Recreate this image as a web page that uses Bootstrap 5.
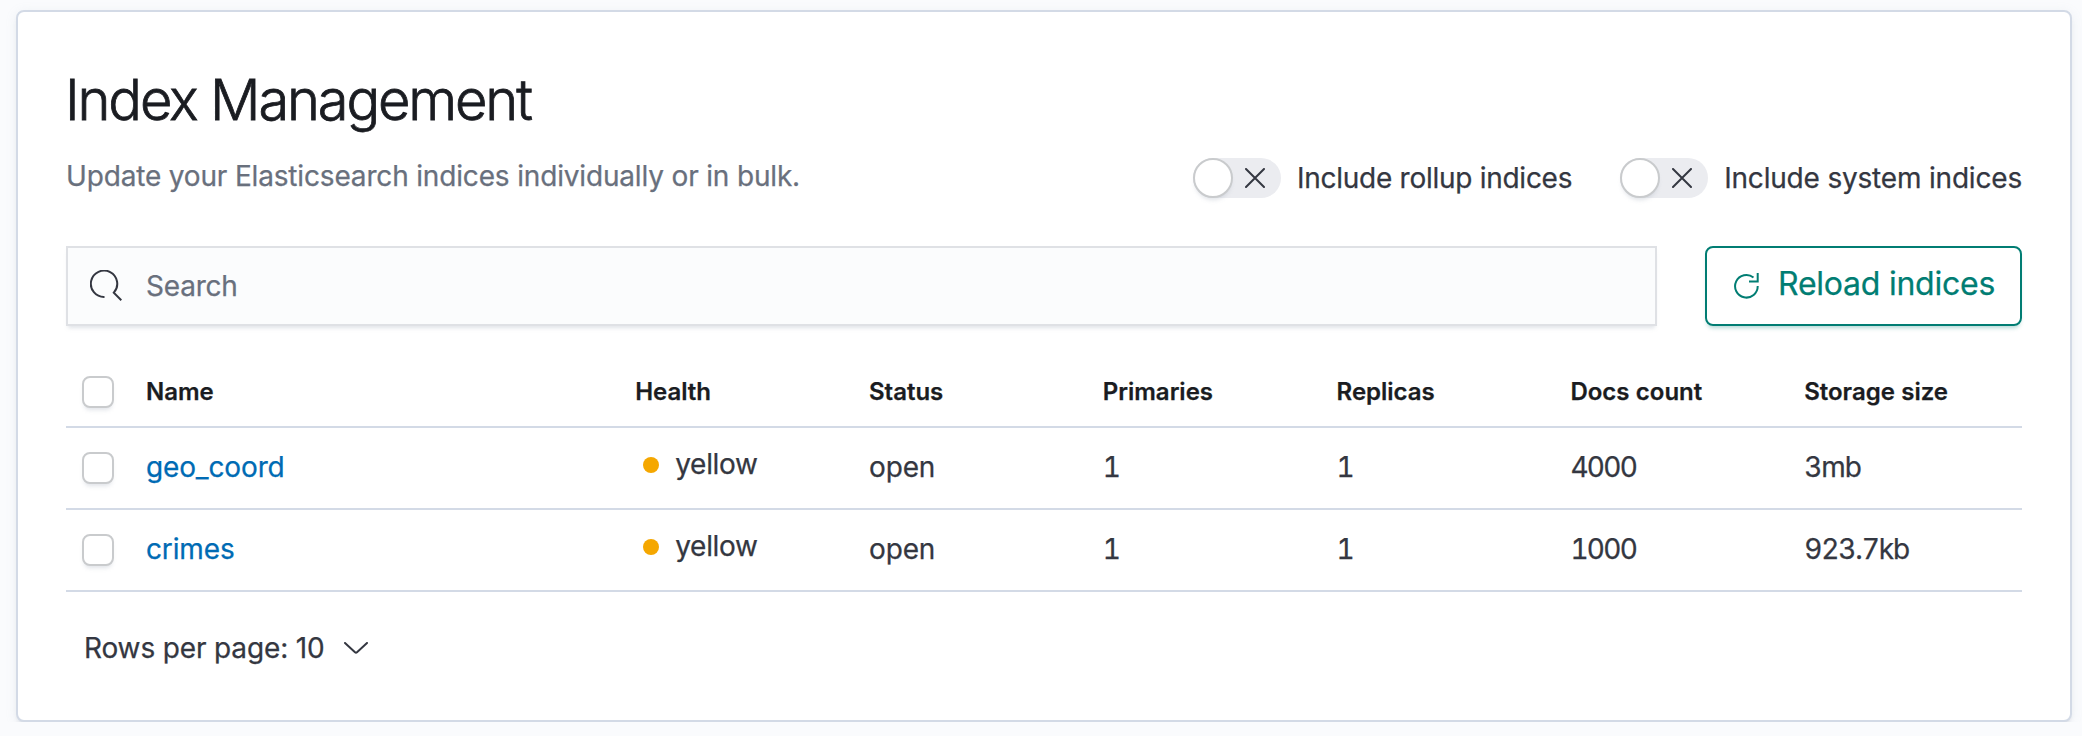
<!DOCTYPE html>
<html lang="en">
<head>
<meta charset="utf-8">
<meta name="viewport" content="width=device-width, initial-scale=1">
<title>Index Management</title>
<link href="https://cdn.jsdelivr.net/npm/bootstrap@5.3.0/dist/css/bootstrap.min.css" rel="stylesheet">
<style>
body{font-family:Inter,"Liberation Sans",sans-serif;font-size:28px;line-height:42px;letter-spacing:-.14px;color:#343741;background:#fafbfd;overflow:hidden;-webkit-text-stroke:.25px currentColor}
.panel{margin:10px 10px 0 16px;height:712px;padding:48px;border:2px solid #d3dae6;border-radius:8px;box-shadow:0 4px 4px -2px rgba(152,162,179,.3),0 2px 12px rgba(152,162,179,.12)}
.page-title{font-size:56px;line-height:80px;font-weight:300;letter-spacing:-2.15px;color:#1a1c21;margin-left:-1px;-webkit-text-stroke:.8px currentColor}
.subdued{color:#69707d;letter-spacing:-.165px}
.toolbar-top{margin-top:15px;height:44px}
.toggles{gap:48px}
.toggle-item{gap:16px;letter-spacing:-.19px}
.toggle-item:first-child{letter-spacing:-.27px}
.track{width:88px;height:40px;border-radius:20px;background:#ebecf0;padding-right:16px}
.thumb{width:40px;height:40px;border-radius:50%;background:#fff;border:2px solid #c9cbcd;box-shadow:0 4px 4px -2px rgba(152,162,179,.3)}
.search-row{margin-top:47px;gap:48px;height:80px}
.search-box{border:2px solid #dfe1e5;background:#fbfcfd;padding-left:22px;box-shadow:0 4px 4px -2px rgba(152,162,179,.3)}
.search-box .form-control{border:0;background:none;box-shadow:none;padding:0;margin-left:24px;font-size:28px;letter-spacing:-.2px;height:76px}
.search-box .form-control::placeholder{color:#69707d;opacity:1}
.btn-reload{--bs-btn-color:#017d73;--bs-btn-border-color:#017d73;width:317px;border-width:2px;border-radius:8px;font-size:32px;letter-spacing:-.24px;gap:19px;padding:0 0 0 27px;box-shadow:0 4px 4px -2px rgba(1,125,115,.3)}
.btn-reload span{padding-bottom:4px}
.index-table{table-layout:fixed;margin:32px 0 0;border-collapse:separate;border-spacing:0;--bs-table-bg:transparent;--bs-table-color:#343741}
.index-table>:not(caption)>*>*{padding:0 16px 2px;height:82px;vertical-align:middle;border-bottom:2px solid #d3dae6;color:#343741;font-feature-settings:"tnum"}
.index-table>thead>tr>th{height:70px;padding-bottom:1px;font-size:24px;font-weight:600;color:#1a1c21;letter-spacing:-.02px;line-height:36px}
.index-table a{color:#006bb4}
.c-check{width:64px}.c-val{width:233.8px}
.index-table .count{letter-spacing:-1.7px}
.index-table .size{letter-spacing:-1.1px}
.index-table .form-check-input{display:block;margin:0;width:32px;height:32px;border:2px solid #c9cbcd;border-radius:8px;box-shadow:0 4px 4px -2px rgba(152,162,179,.3)}
.index-table td .form-check-input{margin-top:2px}
.health{gap:16px;padding:0 0 6px 8px;letter-spacing:-.3px}
.dot{width:16px;height:16px;margin-top:1px;border-radius:50%;background:#f5a700}
.pager{margin:35px 0 0 18px;gap:19px}
</style>
</head>
<body>
<main class="panel bg-white">
  <h1 class="page-title mb-0">Index Management</h1>
  <div class="toolbar-top d-flex justify-content-between">
    <div class="subdued">Update your Elasticsearch indices individually or in bulk.</div>
    <div class="toggles d-flex align-items-end">
      <div class="toggle-item d-flex align-items-center">
        <div class="track d-flex align-items-center justify-content-between"><span class="thumb"></span><svg width="20" height="20" fill="none" stroke="#343741" stroke-width="2" stroke-linecap="round"><path d="M1 1l18 18M19 1L1 19"/></svg></div>
        <span>Include rollup indices</span>
      </div>
      <div class="toggle-item d-flex align-items-center">
        <div class="track d-flex align-items-center justify-content-between"><span class="thumb"></span><svg width="20" height="20" fill="none" stroke="#343741" stroke-width="2" stroke-linecap="round"><path d="M1 1l18 18M19 1L1 19"/></svg></div>
        <span>Include system indices</span>
      </div>
    </div>
  </div>
  <div class="search-row d-flex">
    <div class="search-box flex-grow-1 d-flex align-items-center">
      <svg class="flex-shrink-0" width="32" height="32" fill="none" stroke="#343741" stroke-width="2"><path d="M14.5 27A13.2 13.2 0 1 1 23.8 22.7L31.3 30.2"/></svg>
      <input class="form-control" type="text" placeholder="Search" aria-label="Search">
    </div>
    <button class="btn btn-reload d-flex align-items-center" type="button"><svg width="25" height="26" fill="none" stroke="currentColor" stroke-width="2"><path d="M19.5 4.5A11.3 11.3 0 1 0 23.7 13M23.7 0V8.5H15"/></svg><span>Reload indices</span></button>
  </div>
  <table class="table index-table">
    <colgroup><col class="c-check"><col><col class="c-val"><col class="c-val"><col class="c-val"><col class="c-val"><col class="c-val"><col class="c-val"></colgroup>
    <thead><tr><th><input class="form-check-input" type="checkbox" aria-label="Select all"></th><th>Name</th><th>Health</th><th>Status</th><th>Primaries</th><th>Replicas</th><th>Docs count</th><th>Storage size</th></tr></thead>
    <tbody>
      <tr><td><input class="form-check-input" type="checkbox" aria-label="Select geo_coord"></td><td><a class="text-decoration-none" href="#">geo_coord</a></td><td><div class="health d-flex align-items-center"><span class="dot"></span>yellow</div></td><td>open</td><td>1</td><td>1</td><td class="count">4000</td><td class="size">3mb</td></tr>
      <tr><td><input class="form-check-input" type="checkbox" aria-label="Select crimes"></td><td><a class="text-decoration-none" href="#">crimes</a></td><td><div class="health d-flex align-items-center"><span class="dot"></span>yellow</div></td><td>open</td><td>1</td><td>1</td><td class="count">1000</td><td class="size">923.7kb</td></tr>
    </tbody>
  </table>
  <div class="pager d-flex align-items-center"><span>Rows per page: 10</span><svg width="24" height="12" fill="none" stroke="#343741" stroke-width="2" stroke-linecap="round" stroke-linejoin="round"><path d="M1 1L11 10.3Q12 11.2 13 10.3L23 1"/></svg></div>
</main>
<script src="https://cdn.jsdelivr.net/npm/bootstrap@5.3.0/dist/js/bootstrap.bundle.min.js"></script>
</body>
</html>
